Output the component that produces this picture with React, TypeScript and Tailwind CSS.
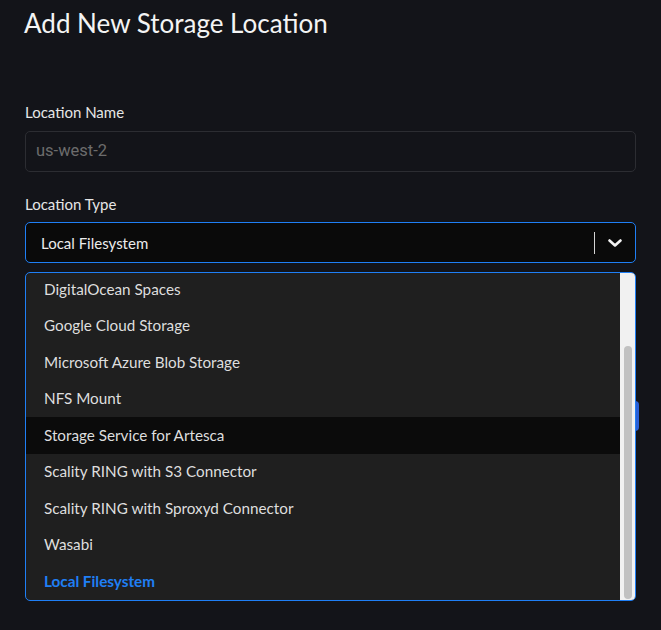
import React from "react";

const items = [
  "DigitalOcean Spaces",
  "Google Cloud Storage",
  "Microsoft Azure Blob Storage",
  "NFS Mount",
  "Storage Service for Artesca",
  "Scality RING with S3 Connector",
  "Scality RING with Sproxyd Connector",
  "Wasabi",
];

export default function App() {
  return (
    <div className="min-h-[630px] bg-[#131419] px-[25px] pt-[8px] font-['Lato',sans-serif]">
      <h1 className="text-[26px] leading-[31px] text-[#f4f4f4] -ml-px">Add New Storage Location</h1>

      <div className="mt-[63px]">
        <label className="block text-[15px] leading-[20px] text-[#e6e6e6] mb-[9px]">Location Name</label>
        <div className="h-[41px] rounded-[5px] border border-[#2c2d32] flex items-center px-[10px]">
          <span className="font-['Roboto',sans-serif] text-[16.5px] text-[#6c6c6c]">us-west-2</span>
        </div>
      </div>

      <div className="mt-[22px]">
        <label className="block text-[15px] leading-[20px] text-[#e6e6e6] mb-[8px]">Location Type</label>
        <div className="relative">
          <div className="h-[41px] rounded-[5px] border border-[#1f7ff5] bg-[#0a0a0a] flex items-center pl-[15px]">
            <span className="flex-1 text-[15px] leading-[18px] text-[#ececec]">Local Filesystem</span>
            <div className="w-px h-[22px] bg-[#d4d4d4]" />
            <div className="w-[40px] flex justify-center">
              <svg width="14" height="8" viewBox="0 0 14 8">
                <polyline points="1.5,1.5 7,6.5 12.5,1.5" fill="none" stroke="#f2f2f2" strokeWidth="2.6" strokeLinecap="round" strokeLinejoin="round" />
              </svg>
            </div>
          </div>

          <div className="flex justify-end mt-[138px] -mr-[3px]">
            <div className="h-[30px] w-[110px] rounded-[4px] bg-[#2a5fd6]" />
          </div>

          <div className="absolute left-0 right-0 top-[50px] h-[329px] rounded-[5px] border border-[#1f7ff5] bg-[#1f1f1f] overflow-hidden flex z-10">
            <div className="flex-1 overflow-hidden">
              <div className="-mt-[2px]">
                {items.map((it) => (
                  <div
                    key={it}
                    className={
                      "h-[36.5px] flex items-center pl-[18px] text-[15.25px] text-[#dedede] " +
                      (it === "Storage Service for Artesca" ? "bg-[#0b0b0b]" : "")
                    }
                  >
                    {it}
                  </div>
                ))}
                <div className="h-[36.5px] flex items-center pl-[18px] text-[15.25px] font-bold text-[#1f7ff5]">
                  Local Filesystem
                </div>
              </div>
            </div>
            <div className="w-[15px] bg-[#f1f1f1] relative">
              <div className="absolute left-[4px] w-[8px] top-[73px] bottom-[1px] rounded-full bg-[#c1c1c1]" />
            </div>
          </div>
        </div>
      </div>
    </div>
  );
}
